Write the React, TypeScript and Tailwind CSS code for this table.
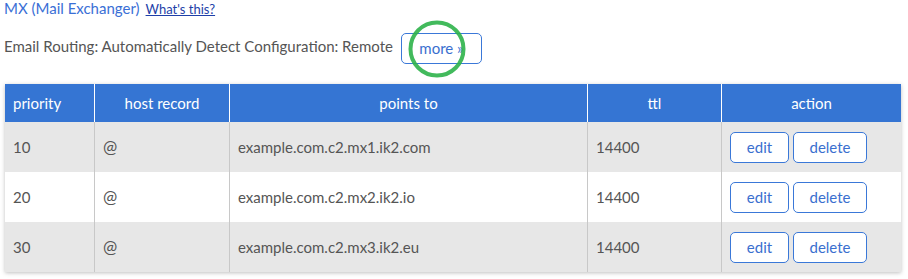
import React from "react";

type Rec = { priority: string; host: string; points: string; ttl: string };

const records: Rec[] = [
  { priority: "10", host: "@", points: "example.com.c2.mx1.ik2.com", ttl: "14400" },
  { priority: "20", host: "@", points: "example.com.c2.mx2.ik2.io", ttl: "14400" },
  { priority: "30", host: "@", points: "example.com.c2.mx3.ik2.eu", ttl: "14400" },
];

const font = { fontFamily: "Lato, 'Open Sans', sans-serif" };

function OutlineButton({ children, className }: { children: React.ReactNode; className: string }) {
  return (
    <button
      className={`h-[31px] rounded-[5px] border border-[#3a78d8] bg-white text-[15px] text-[#3a6fcf] ${className}`}
    >
      {children}
    </button>
  );
}

export default function App() {
  return (
    <div className="w-[908px] h-[279px] bg-white text-[#555] overflow-hidden" style={font}>
      <div className="pl-[4px] pt-[0px] flex items-baseline gap-[6px] h-[16px] leading-[16px]">
        <span className="text-[15px] text-[#3a6fd6]">MX (Mail Exchanger)</span>
        <a className="text-[13px] text-[#1e3fa8] underline">What's this?</a>
      </div>

      <div className="flex items-start pl-[4px] mt-[17px] h-[31px]">
        <span className="text-[15px] leading-[26px] text-[#555]">
          Email Routing: Automatically Detect Configuration: Remote
        </span>
        <div className="relative ml-[8px]">
          <OutlineButton className="w-[81px] leading-[29px]">more »</OutlineButton>
          <svg
            className="absolute left-[5px] top-[-15px] pointer-events-none blur-[0.5px]"
            width="62"
            height="62"
            viewBox="0 0 62 62"
          >
            <circle cx="31" cy="31" r="26.5" fill="none" stroke="#2db34a" strokeWidth="4" opacity="0.9" />
          </svg>
        </div>
      </div>

      <div className="ml-[5px] mt-[20px] w-[896px] shadow-[0_1px_4px_rgba(0,0,0,0.25)]">
        <div className="grid grid-cols-[89px_135px_358px_134px_180px] h-[38px] bg-[#3575d3] text-white text-[15px] leading-[38px]">
          <div className="pl-[8px]">priority</div>
          <div className="border-l border-white text-center">host record</div>
          <div className="border-l border-white text-center">points to</div>
          <div className="border-l border-white text-center">ttl</div>
          <div className="border-l border-white text-center">action</div>
        </div>
        {records.map((r, i) => (
          <div
            key={r.priority}
            className={`grid grid-cols-[89px_135px_358px_134px_180px] h-[50px] text-[15px] items-stretch ${
              i % 2 === 0 ? "bg-[#e7e7e7]" : "bg-white"
            }`}
          >
            <div className="pl-[8px] flex items-center">{r.priority}</div>
            <div className="border-l border-[#c8c8c8] pl-[8px] flex items-center text-[17px]">{r.host}</div>
            <div className="border-l border-[#c8c8c8] pl-[8px] flex items-center">{r.points}</div>
            <div className="border-l border-[#c8c8c8] pl-[8px] flex items-center">{r.ttl}</div>
            <div className="border-l border-[#c8c8c8] pl-[8px] flex items-center gap-[4px]">
              <OutlineButton className="w-[59px]">edit</OutlineButton>
              <OutlineButton className="w-[74px]">delete</OutlineButton>
            </div>
          </div>
        ))}
      </div>
    </div>
  );
}
